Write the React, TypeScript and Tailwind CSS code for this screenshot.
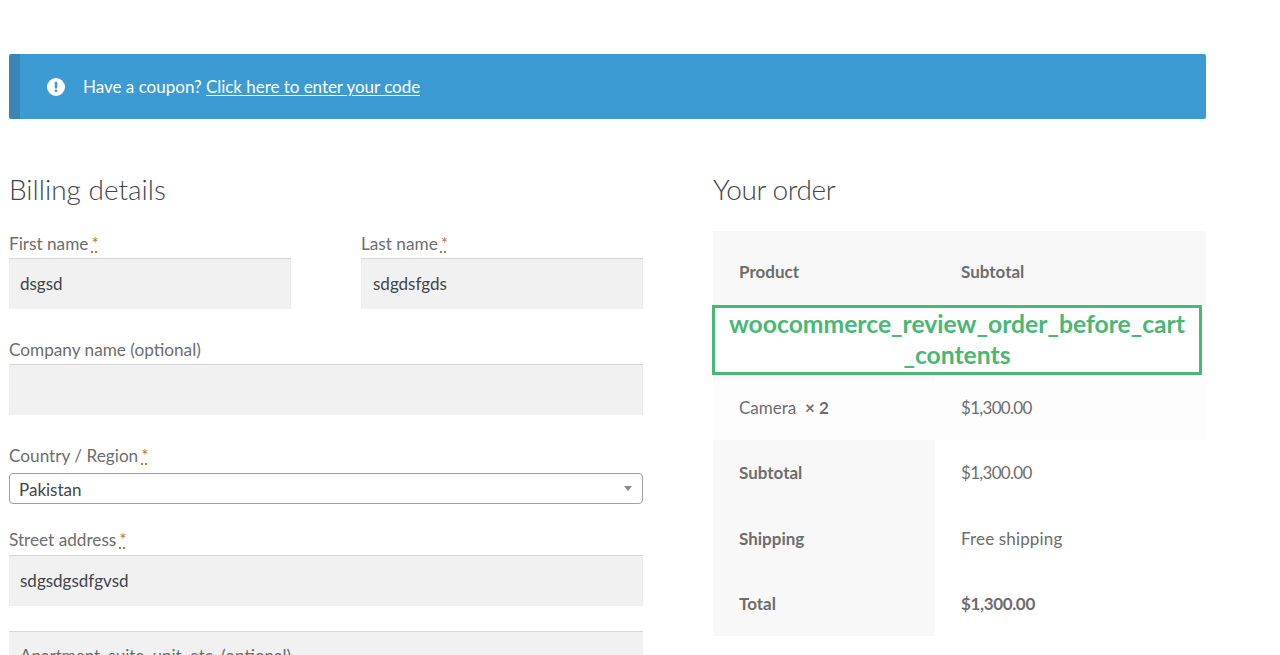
const font = "[font-family:'Lato','Noto_Sans',sans-serif]";

function Req() {
  return (
    <span className="ml-[3px] text-[#b5763f] underline decoration-dotted decoration-[2px] underline-offset-[1px]">*</span>
  );
}

function Field({ value, className }: { value: string; className: string }) {
  return (
    <div className={`flex items-center border-t border-t-[#d4d4d4] border-x border-x-[#ececec] bg-[#f1f1f1] pl-[10px] text-[17px] text-[#43454b] ${className}`}>
      {value}
    </div>
  );
}

function Label({ text, req, className = "" }: { text: string; req?: boolean; className?: string }) {
  return (
    <div className={`text-[17.2px] leading-[24px] text-[#6d6d6d] ${className}`}>
      {text}
      {req && <Req />}
    </div>
  );
}

function TotalRow({ label, value, valueClass = "" }: { label: string; value: string; valueClass?: string }) {
  return (
    <div className="flex h-[65.3px] items-center">
      <div className="flex h-full w-[222px] items-center bg-[#f8f8f8] pl-[26px] pt-[1px] font-bold">{label}</div>
      <div className={`pl-[26px] pt-[1px] ${valueClass}`}>{value}</div>
    </div>
  );
}

export default function App() {
  return (
    <div className={`h-[655px] w-[1280px] overflow-hidden bg-white pl-[9px] pt-[54px] ${font}`}>
      <div className="w-[1197px]">
        <div className="flex h-[65px] items-center rounded-[2px] border-l-[11px] border-l-[#3a85b8] bg-[#3d9bd3] pl-[27px] text-[17px] text-white">
          <svg width="18" height="18" viewBox="0 0 18 18" className="mr-[18px]">
            <circle cx="9" cy="9" r="9" fill="#fff" />
            <rect x="7.7" y="3.8" width="2.6" height="6.6" rx="1" fill="#3d9bd3" />
            <circle cx="9" cy="12.8" r="1.4" fill="#3d9bd3" />
          </svg>
          <span>Have a coupon?&nbsp;</span>
          <span className="underline underline-offset-[2px] tracking-[-0.04px]">Click here to enter your code</span>
        </div>

        <div className="mt-[51px] flex">
          <div className="w-[634px]">
            <h3 className="text-[28px] font-light leading-[38px] text-[#43454b]">Billing details</h3>
            <div className="mt-[24px] flex gap-[70px]">
              <div className="w-[282px]">
                <Label text="First name" req />
                <Field value="dsgsd" className="mt-[2px] h-[51px]" />
              </div>
              <div className="w-[282px]">
                <Label text="Last name" req />
                <Field value="sdgdsfgds" className="mt-[2px] h-[51px] pl-[11px]" />
              </div>
            </div>
            <Label text="Company name (optional)" className="mt-[29px]" />
            <Field value="" className="mt-[2px] h-[51px]" />
            <Label text="Country / Region" req className="mt-[29px]" />
            <div className="mt-[5px] flex h-[31px] items-center justify-between rounded-[4px] border border-[#a0a0a0] pl-[9px] pr-[10px] pt-[2px] text-[17px] text-[#43454b]">
              Pakistan
              <span className="mb-[2px] h-0 w-0 border-x-[4px] border-t-[5px] border-x-transparent border-t-[#888888]" />
            </div>
            <Label text="Street address" req className="mt-[24px]" />
            <Field value="sdgsdgsdfgvsd" className="mt-[3px] h-[51px]" />
            <div className="mt-[25px] flex h-[60px] items-start border-t border-t-[#d4d4d4] bg-[#f1f1f1] pl-[11px] pt-[12px] text-[17px] leading-[24px] text-[#6d6d6d]">
              Apartment, suite, unit, etc. (optional)
            </div>
          </div>

          <div className="ml-[70px] w-[493px] text-[17px] text-[#6d6d6d]">
            <h3 className="text-[28px] font-light leading-[38px] tracking-[-0.4px] text-[#43454b]">Your order</h3>
            <div className="mt-[23px] flex h-[74px] items-start bg-[#f8f8f8] pt-[29px] font-bold leading-[24px]">
              <div className="w-[222px] pl-[26px]">Product</div>
              <div className="pl-[26px]">Subtotal</div>
            </div>
            <div className="ml-[-1px] flex h-[70px] w-[490px] flex-col items-center justify-start border-[3px] border-[#48b875] bg-white text-center text-[24.7px] font-bold leading-[31px] text-[#48b875]">
              <div>woocommerce_review_order_before_cart</div>
              <div>_contents</div>
            </div>
            <div className="h-[5px] w-[222px] bg-[#f8f8f8]" />
            <div className="flex h-[60px] items-start bg-[#fdfdfd] pt-[16px] leading-[24px]">
              <div className="w-[222px] pl-[26px]">
                Camera&nbsp; <span className="font-bold">× 2</span>
              </div>
              <div className="pl-[26px] tracking-[-0.7px]">$1,300.00</div>
            </div>
            <TotalRow label="Subtotal" value="$1,300.00" valueClass="tracking-[-0.7px]" />
            <TotalRow label="Shipping" value="Free shipping" valueClass="tracking-[0.15px]" />
            <TotalRow label="Total" value="$1,300.00" valueClass="font-bold tracking-[-0.35px]" />
          </div>
        </div>
      </div>
    </div>
  );
}
